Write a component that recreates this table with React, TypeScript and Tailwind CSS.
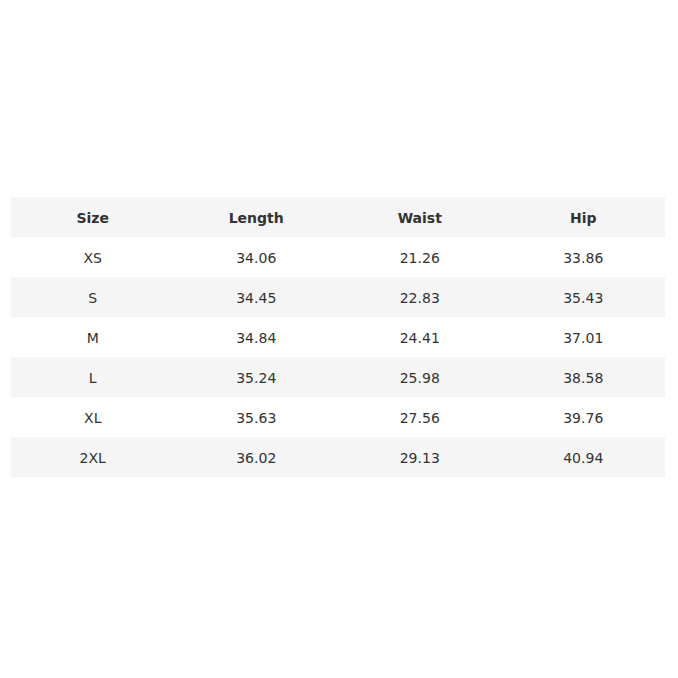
const headers = ['Size', 'Length', 'Waist', 'Hip'];

const rows = [
  ['XS', '34.06', '21.26', '33.86'],
  ['S', '34.45', '22.83', '35.43'],
  ['M', '34.84', '24.41', '37.01'],
  ['L', '35.24', '25.98', '38.58'],
  ['XL', '35.63', '27.56', '39.76'],
  ['2XL', '36.02', '29.13', '40.94'],
];

export default function App() {
  return (
    <div className="w-[678px] h-[678px] bg-white flex flex-col pt-[197px] px-[11px] font-['DejaVu_Sans',sans-serif] text-[14px] text-[#333]">
      <div className="w-[654px]">
        <div className="grid grid-cols-4 h-10 pt-[2px] items-center bg-[#f5f5f5] font-bold">
          {headers.map((h) => (
            <div key={h} className="text-center">{h}</div>
          ))}
        </div>
        {rows.map((r, i) => (
          <div
            key={r[0]}
            className={`grid grid-cols-4 h-10 pt-[2px] items-center ${i % 2 === 1 ? 'bg-[#f5f5f5]' : 'bg-white'}`}
          >
            {r.map((c, j) => (
              <div key={j} className="text-center">{c}</div>
            ))}
          </div>
        ))}
      </div>
    </div>
  );
}
